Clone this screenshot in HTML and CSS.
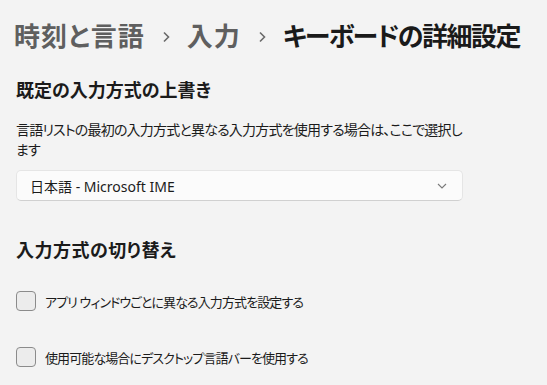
FILE: index.html
```html
<!DOCTYPE html>
<html lang="ja">
<head>
  <meta charset="UTF-8" />
  <title>キーボードの詳細設定</title>
  <meta name="viewport" content="width=device-width, initial-scale=1.0" />
  <link rel="stylesheet" href="styles.css">
</head>
<body>
  <div class="page">
    <h1 class="breadcrumb">
      <span class="crumb">時刻と言語</span>
      <svg class="sep" width="8" height="12" viewBox="0 0 8 12"><path d="M2 1.5 L6.5 6 L2 10.5" fill="none" stroke="#6a6a6a" stroke-width="1.6"/></svg>
      <span class="crumb">入力</span>
      <svg class="sep" width="8" height="12" viewBox="0 0 8 12"><path d="M2 1.5 L6.5 6 L2 10.5" fill="none" stroke="#6a6a6a" stroke-width="1.6"/></svg>
      <span class="current">キーボードの詳細設定</span>
    </h1>

    <section class="group">
      <h2>既定の入力方式の上書き</h2>
      <p class="desc">言語リストの最初の入力方式と異なる入力方式を使用する場合は、ここで選択します</p>
      <div class="dropdown">
        <span>日本語 - Microsoft IME</span>
        <svg width="10" height="6" viewBox="0 0 10 6"><path d="M1 1 L5 5 L9 1" fill="none" stroke="#7a7a7a" stroke-width="1.1"/></svg>
      </div>
    </section>

    <section class="group switch">
      <h2>入力方式の切り替え</h2>
      <label class="check"><span class="box"></span>アプリ ウィンドウごとに異なる入力方式を設定する</label>
      <label class="check"><span class="box"></span>使用可能な場合にデスクトップ言語バーを使用する</label>
    </section>
  </div>
</body>
</html>
```

FILE: styles.css
```css
body {
  margin: 0;
  background-color: #f3f3f3;
  font-family: "Noto Sans", "Noto Sans CJK JP", sans-serif;
  font-feature-settings: "palt";
  color: #1b1b1b;
}
.page {
  padding: 0 16px;
}
.breadcrumb {
  display: flex;
  align-items: center;
  gap: 17px;
  margin: 16px 0 0 -2px;
  height: 40px;
  font-size: 26px;
  font-weight: 700;
  line-height: 40px;
  white-space: nowrap;
}
.crumb {
  color: #5f5f5f;
  letter-spacing: 1px;
}
.current {
  color: #1a1a1a;
  letter-spacing: -1.5px;
}
.sep {
  flex-shrink: 0;
  margin-top: 2px;
}
.group h2 {
  margin: 0;
  font-size: 18px;
  font-weight: 700;
  line-height: 28px;
}
.group:first-of-type h2 {
  margin-top: 20px;
}
.desc {
  width: 455px;
  margin: 16px 0 10px;
  font-size: 14px;
  line-height: 20px;
  letter-spacing: -0.8px;
}
.dropdown {
  display: flex;
  align-items: center;
  justify-content: space-between;
  width: 447px;
  height: 31px;
  box-sizing: border-box;
  padding: 0 15px 0 13px;
  background-color: #fbfbfb;
  border: 1px solid #e5e5e5;
  border-bottom-color: #d0d0d0;
  border-radius: 5px;
  font-size: 14px;
}
.switch h2 {
  margin-top: 35px;
  letter-spacing: 0.5px;
}
.check {
  display: flex;
  align-items: center;
  gap: 9px;
  height: 20px;
  margin-top: 27px;
  font-size: 13px;
  letter-spacing: -0.9px;
}
.check + .check {
  margin-top: 36px;
}
.box {
  width: 18px;
  height: 18px;
  border: 1px solid #8b8b8b;
  border-radius: 4px;
  background-color: #ececec;
}
```
